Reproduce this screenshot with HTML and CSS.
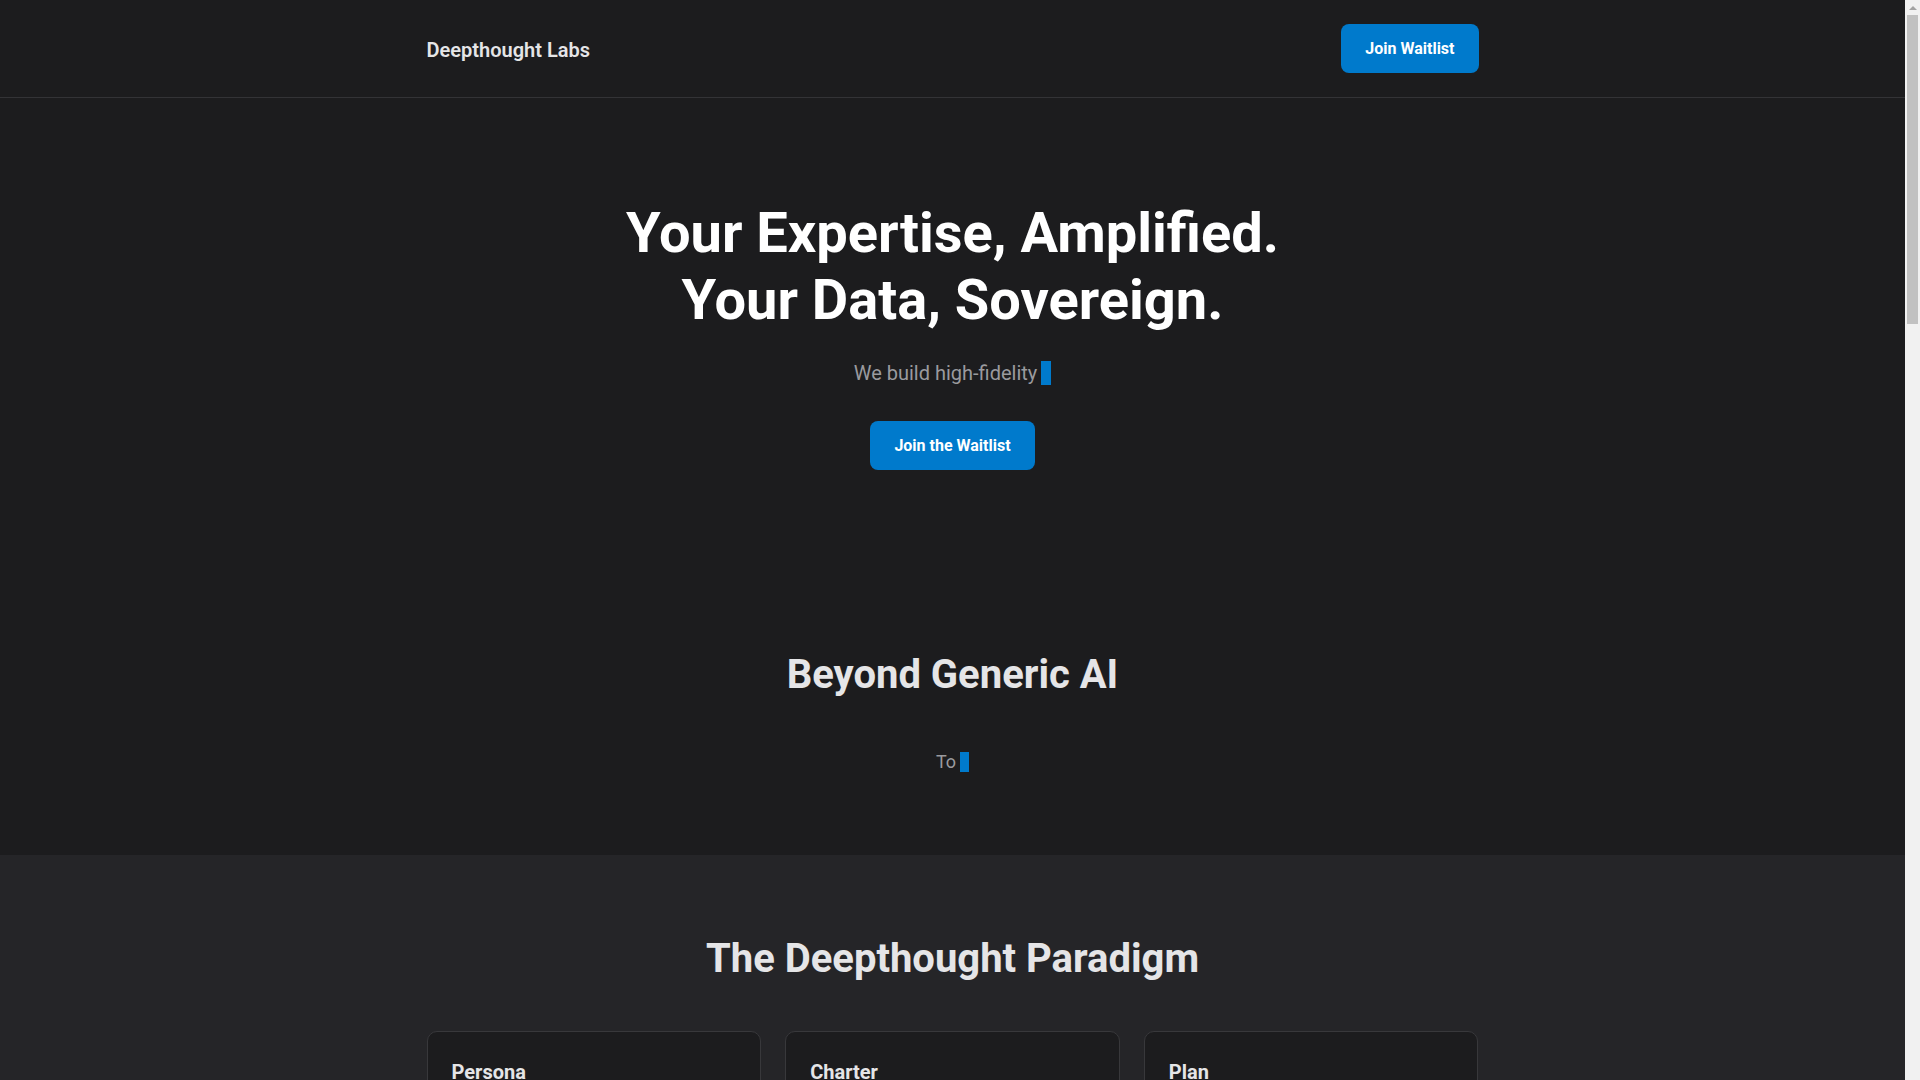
FILE: index.html
```html
<!DOCTYPE html>
<html lang="en">
<head>
    <meta charset="UTF-8">
    <meta name="viewport" content="width=device-width, initial-scale=1.0">
    <title>Deepthought Labs</title>
    <link rel="stylesheet" href="styles.css">
</head>
<body>
    <header class="site-header">
        <div class="container header-inner">
            <a class="logo" href="#">Deepthought Labs</a>
            <a class="btn" href="#waitlist">Join Waitlist</a>
        </div>
    </header>

    <main>
        <section class="hero">
            <div class="container">
                <h1 class="hero-title">Your Expertise, Amplified.<br>Your Data, Sovereign.</h1>
                <p class="hero-sub"><span class="typed">We build high-fidelity</span><span class="cursor"></span></p>
                <a class="btn" href="#waitlist">Join the Waitlist</a>
            </div>
        </section>

        <section class="section">
            <div class="container">
                <h2 class="section-title">Beyond Generic AI</h2>
                <p class="typed-line"><span class="typed">To</span><span class="cursor small"></span></p>
            </div>
        </section>

        <section class="section alt">
            <div class="container">
                <h2 class="section-title">The Deepthought Paradigm</h2>
                <div class="cards">
                    <div class="card">
                        <h3>Persona</h3>
                        <p>A digital counterpart trained on your own knowledge, voice and judgement, so the answers it gives sound like you.</p>
                    </div>
                    <div class="card">
                        <h3>Charter</h3>
                        <p>The rules you set for what it may say, who it may talk to and which sources it may draw on.</p>
                    </div>
                    <div class="card">
                        <h3>Plan</h3>
                        <p>A clear path from your first upload to a working assistant, with every step under your control.</p>
                    </div>
                </div>
            </div>
        </section>

        <section class="section">
            <div class="container">
                <h2 class="section-title">How It Works</h2>
                <div class="steps">
                    <div class="step">
                        <span class="step-num">01</span>
                        <h3>Capture</h3>
                        <p>Bring in your documents, notes, talks and past work. Nothing leaves your environment.</p>
                    </div>
                    <div class="step">
                        <span class="step-num">02</span>
                        <h3>Distill</h3>
                        <p>We model how you reason, not only what you have written, and check it with you.</p>
                    </div>
                    <div class="step">
                        <span class="step-num">03</span>
                        <h3>Deploy</h3>
                        <p>Run your persona where you choose: on your own hardware or in a private cloud.</p>
                    </div>
                </div>
            </div>
        </section>

        <section class="section alt">
            <div class="container narrow">
                <h2 class="section-title">Your Data Stays Yours</h2>
                <p class="lead">Every model we build is owned by the expert it is built from. You can inspect it, move it or delete it at any time.</p>
            </div>
        </section>

        <section class="section" id="waitlist">
            <div class="container narrow">
                <h2 class="section-title">Join the Waitlist</h2>
                <p class="lead">We are onboarding a small group of experts first. Leave your email and we will be in touch.</p>
                <form class="signup">
                    <input type="email" placeholder="you@example.com">
                    <button class="btn" type="button">Join Waitlist</button>
                </form>
            </div>
        </section>
    </main>

    <footer class="site-footer">
        <div class="container">
            <p>&copy; 2024 Deepthought Labs</p>
        </div>
    </footer>

    <!-- stand-in for the browser scrollbar -->
    <div class="scrollbar">
        <span class="scroll-arrow"></span>
        <span class="scroll-thumb"></span>
    </div>
</body>
</html>
```

FILE: styles.css
```css
* {
    margin: 0;
    padding: 0;
    box-sizing: border-box;
}

body {
    background: #1c1c1e;
    color: #e5e5e7;
    font-family: Roboto, 'Liberation Sans', sans-serif;
    line-height: 1.5;
    margin-right: 15px;
}

a {
    text-decoration: none;
}

.container {
    max-width: 1100px;
    margin: 0 auto;
    padding: 0 24px;
}

.narrow {
    max-width: 760px;
}

/* header */
.site-header {
    border-bottom: 1px solid #333336;
    padding: 24px 0;
}

.header-inner {
    display: flex;
    justify-content: space-between;
    align-items: center;
}

.logo {
    color: #e5e5e7;
    font-size: 20px;
    font-weight: 600;
    line-height: 1;
    padding-top: 2px;
}

.btn {
    display: inline-block;
    background: #007acc;
    color: #fff;
    font-family: inherit;
    font-size: 16px;
    font-weight: 700;
    line-height: 19px;
    padding: 15px 24px;
    border: none;
    border-radius: 8px;
    cursor: pointer;
}

.btn:hover {
    background: #0069b0;
}

/* hero */
.hero {
    text-align: center;
    padding: 102px 0 101px;
}

.hero-title {
    color: #fff;
    font-size: 56px;
    font-weight: 700;
    line-height: 1.2;
    margin-bottom: 24px;
}

.hero-sub {
    color: #9a9a9e;
    font-size: 20px;
    line-height: 30px;
    margin-bottom: 33px;
    display: flex;
    justify-content: center;
    align-items: center;
}

.cursor {
    display: inline-block;
    width: 10px;
    height: 24px;
    margin-left: 4px;
    background: #007acc;
}

.cursor.small {
    width: 9px;
    height: 20px;
}

/* sections */
.section {
    padding: 80px 0;
    text-align: center;
}

.hero + .section {
    padding-bottom: 79px;
}

.section.alt {
    background: #252528;
}

.section-title {
    color: #e5e5e7;
    font-size: 40px;
    font-weight: 700;
    line-height: 1.2;
    margin-bottom: 48px;
}

.typed-line {
    color: #9a9a9e;
    font-size: 18px;
    line-height: 29px;
    display: flex;
    justify-content: center;
    align-items: center;
}

.lead {
    color: #9a9a9e;
    font-size: 18px;
    line-height: 1.6;
}

.cards {
    display: grid;
    grid-template-columns: repeat(3, 1fr);
    gap: 24px;
    text-align: left;
}

.card {
    background: #1c1c1e;
    border: 1px solid #38383b;
    border-radius: 10px;
    padding: 24px;
    min-height: 260px;
}

.card h3 {
    font-size: 20px;
    font-weight: 700;
    line-height: 32px;
    margin-bottom: 12px;
}

.card p {
    color: #9a9a9e;
    font-size: 16px;
    line-height: 1.6;
}

.steps {
    display: grid;
    grid-template-columns: repeat(3, 1fr);
    gap: 24px;
    text-align: left;
}

.step {
    padding: 24px 0;
    border-top: 1px solid #38383b;
    min-height: 240px;
}

.step-num {
    color: #007acc;
    font-size: 14px;
    font-weight: 700;
}

.step h3 {
    font-size: 20px;
    margin: 8px 0 12px;
}

.step p {
    color: #9a9a9e;
    line-height: 1.6;
}

.section.alt .lead {
    min-height: 200px;
}

.signup {
    display: flex;
    gap: 12px;
    justify-content: center;
    margin-top: 32px;
    min-height: 300px;
}

.signup input {
    width: 320px;
    height: 49px;
    padding: 0 16px;
    background: #252528;
    border: 1px solid #38383b;
    border-radius: 8px;
    color: #e5e5e7;
    font-family: inherit;
    font-size: 16px;
}

.site-footer {
    border-top: 1px solid #333336;
    padding: 32px 0;
    color: #6e6e73;
    font-size: 14px;
    text-align: center;
}

/* fake scrollbar */
.scrollbar {
    position: fixed;
    top: 0;
    right: 0;
    width: 15px;
    height: 100vh;
    background: #f1f1f1;
    display: flex;
    flex-direction: column;
    align-items: center;
}

.scroll-arrow {
    margin-top: 6px;
    width: 0;
    height: 0;
    border-left: 4px solid transparent;
    border-right: 4px solid transparent;
    border-bottom: 4px solid #a3a3a3;
}

.scroll-thumb {
    margin-top: 5px;
    width: 11px;
    height: 309px;
    background: #c1c1c1;
}
```
